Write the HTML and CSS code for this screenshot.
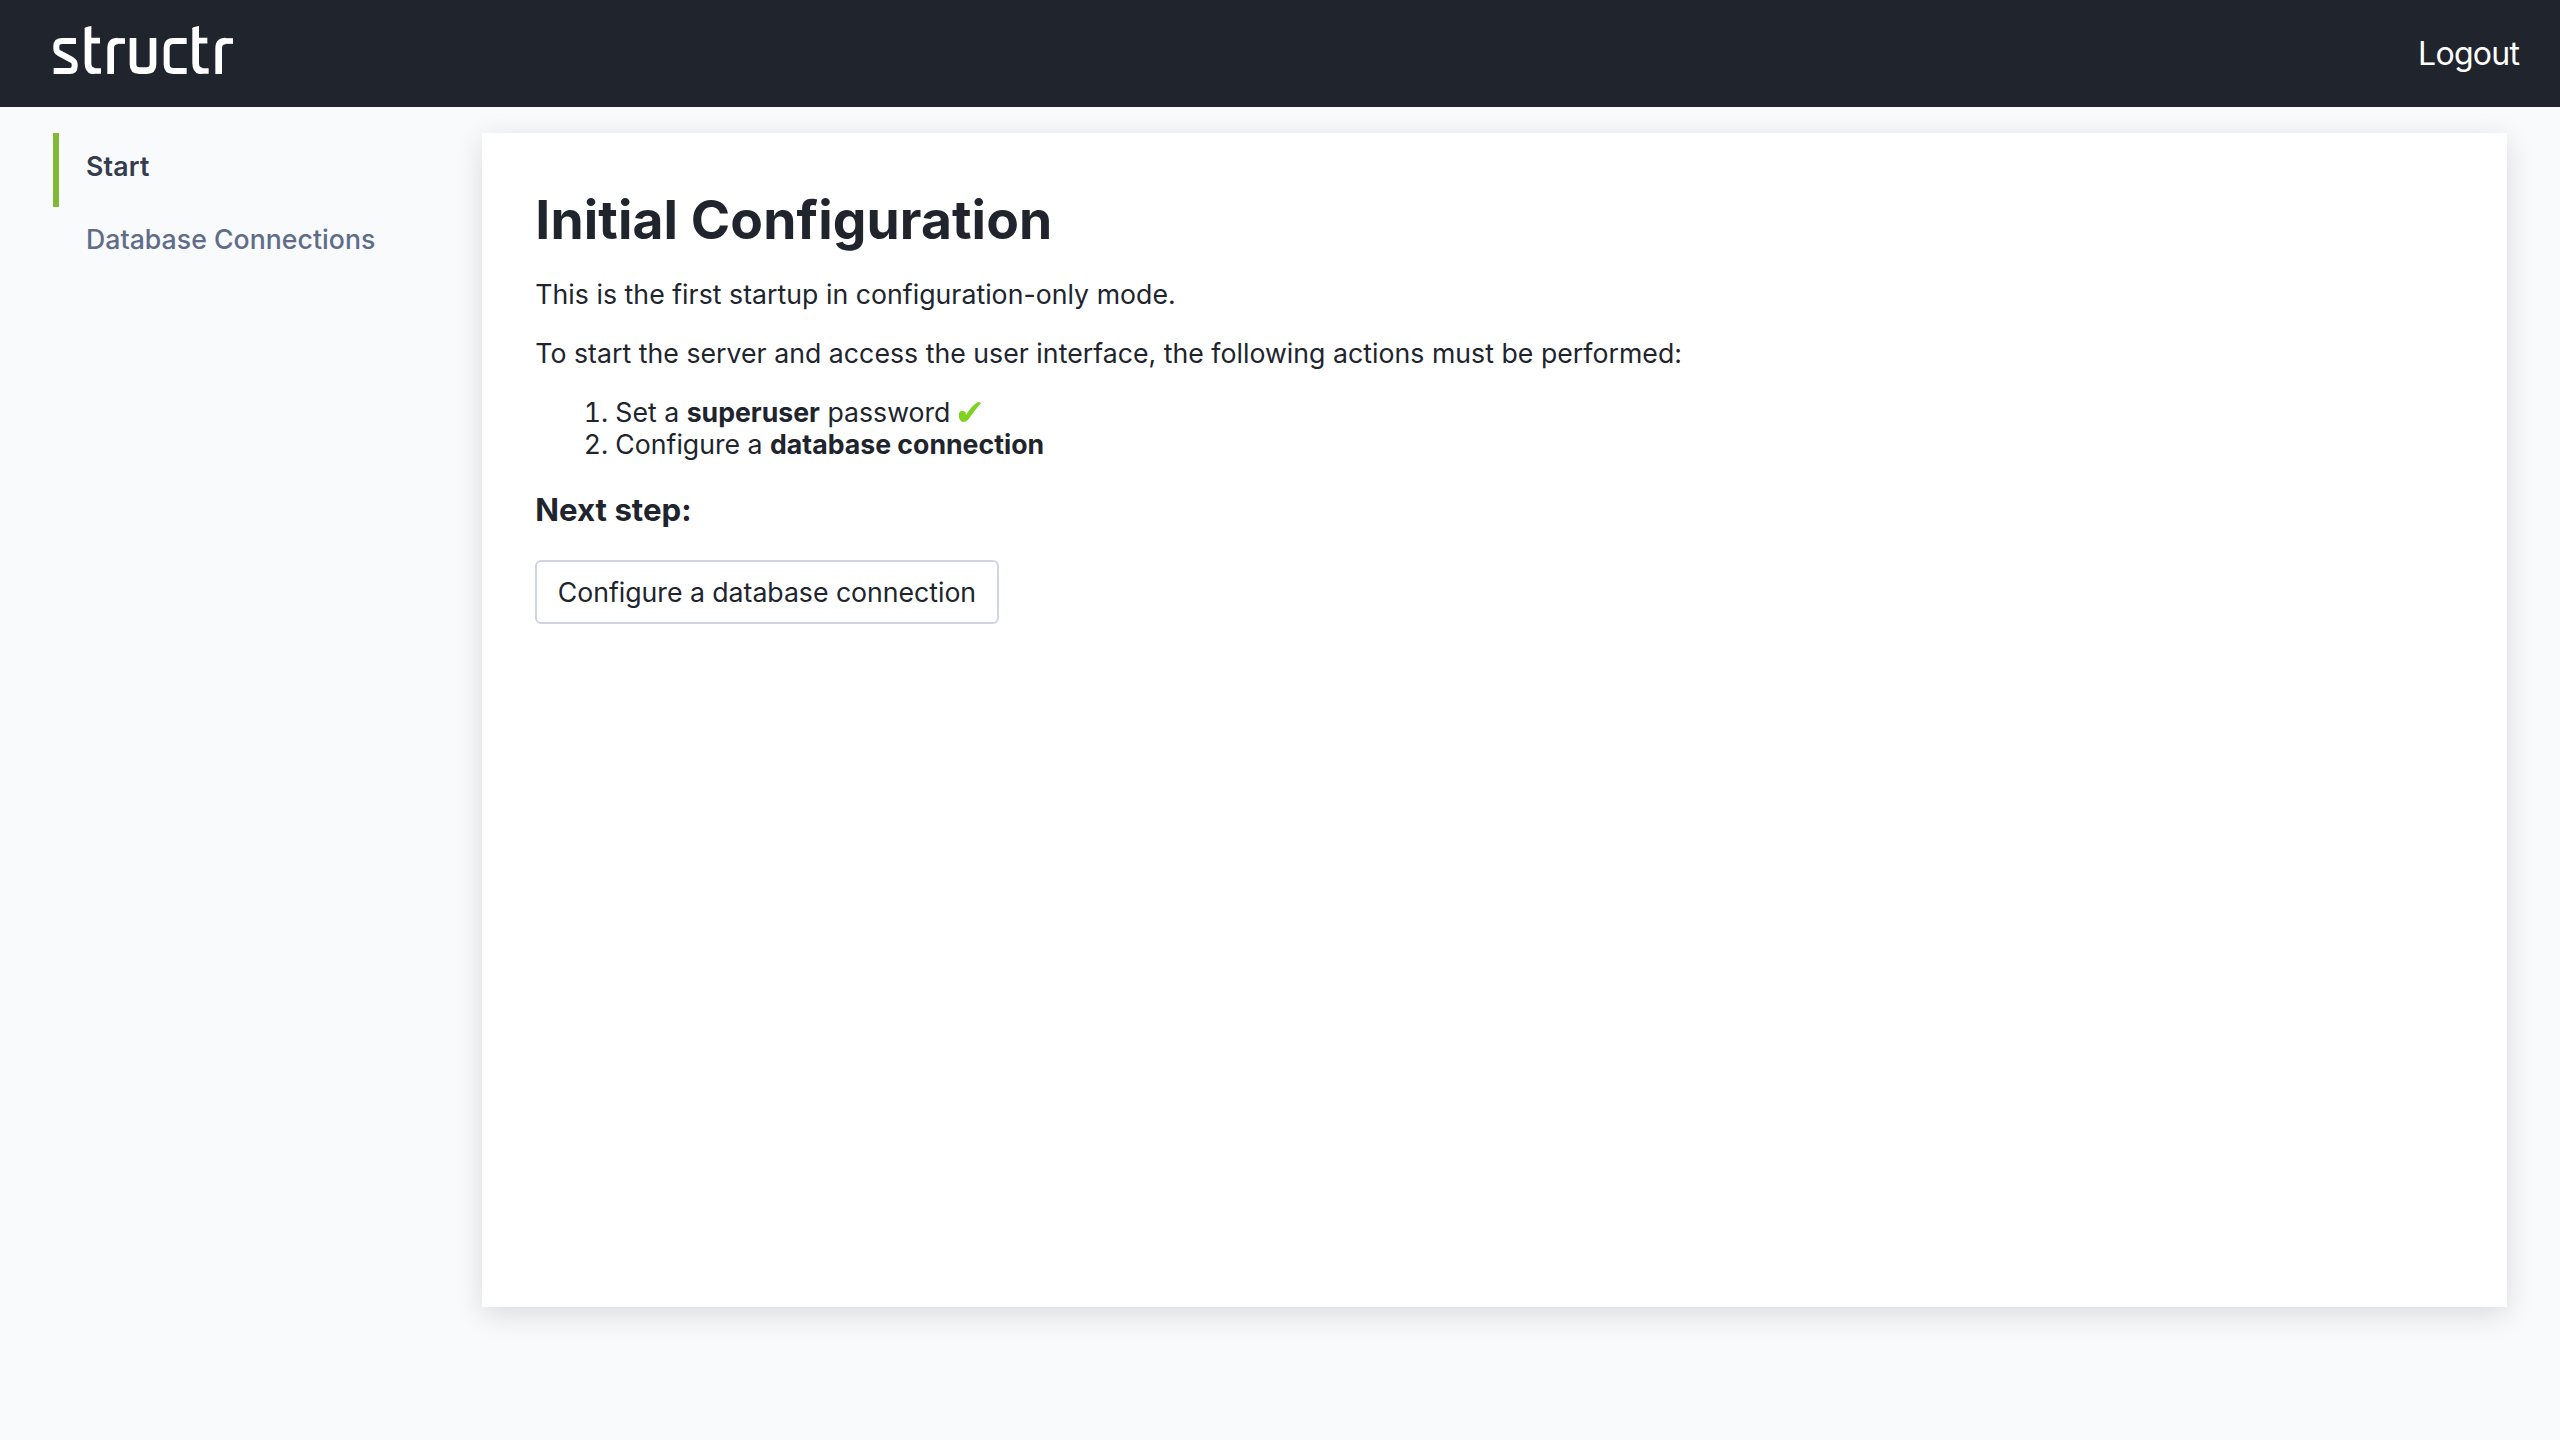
FILE: index.html
```html
<!DOCTYPE html>
<html lang="en">
<head>
<meta charset="utf-8">
<title>Structr Configuration</title>
<link rel="stylesheet" href="styles.css">
</head>
<body>
<header class="header">
  <svg class="logo" viewBox="39 48 540 144" role="img" aria-label="structr">
    <g fill="none" stroke="#fff" stroke-width="17" stroke-linejoin="round">
      <path stroke-width="18" d="M108 93H67Q49 93 49 109V116Q49 124 57 129L96 150Q104 155 104 163V168Q104 183 90 183H41"/>
      <path stroke-width="20" d="M144 54V160Q144 183 164 183"/>
      <path d="M144 92H180M158 183H183"/>
      <path stroke-width="20" d="M212 192V115Q212 93 233 93"/>
      <path d="M230 93H255"/>
      <path stroke-width="20" d="M279 84V163Q279 182 298 182H320Q339 182 339 163V84"/>
      <path stroke-width="18" d="M440 93H400Q380 93 380 113V163Q380 183 400 183H440"/>
      <path stroke-width="20" d="M467 54V160Q467 183 487 183"/>
      <path d="M467 92H502M481 183H506"/>
      <path stroke-width="20" d="M536 192V115Q536 93 557 93"/>
      <path d="M554 93H579"/>
    </g>
    <path fill="#fff" d="M134 55Q136 50 154 48V56H134ZM457 55Q459 50 477 48V56H457Z"/>
  </svg>
  <a class="logout">Logout</a>
</header>
<div class="layout">
  <nav class="menu">
    <a class="menu-item active">Start</a>
    <a class="menu-item">Database Connections</a>
  </nav>
  <main class="card">
    <h1>Initial Configuration</h1>
    <p>This is the first startup in configuration-only mode.</p>
    <p>To start the server and access the user interface, the following actions must be performed:</p>
    <ol>
      <li>Set a <b>superuser</b> password <svg class="check" viewBox="0 0 23 20"><path d="M1 11Q3 8 6 9Q8 10 8 13Q13 4 20 0Q22 0 23 1Q16 9 10 18Q8 20 5 20Q2 19 1 16Z"/></svg></li>
      <li>Configure a <b>database connection</b></li>
    </ol>
    <h3>Next step:</h3>
    <button class="button" type="button">Configure a database connection</button>
  </main>
</div>
</body>
</html>
```
FILE: styles.css
```css
* { box-sizing: border-box; }
body {
  margin: 0;
  min-height: 1440px;
  background: #f9fafc;
  color: #20242d;
  font: 26.667px/32px Inter, "Liberation Sans", sans-serif;
}
.header {
  display: flex;
  justify-content: space-between;
  align-items: flex-start;
  height: 107px;
  padding: 26px 40.7px 0 53px;
  background: #20242d;
  color: #fff;
}
.logo { width: 180px; height: 48px; }
.logout {
  padding-top: 8px;
  font-size: 32px;
  line-height: 40px;
  letter-spacing: -0.7px;
}
.layout {
  display: flex;
  padding: 26px 53px 0;
}
.menu { width: 429px; flex: none; }
.menu-item {
  display: block;
  height: 73px;
  padding: 16px 0 0 27px;
  border-left: 6px solid transparent;
  color: #5f6c8a;
  font-weight: 500;
  letter-spacing: 0.03px;
}
.menu-item.active {
  height: 74px;
  padding-top: 17px;
  border-color: #81b937;
  color: #353c4d;
  font-weight: 600;
  letter-spacing: 0.2px;
}
.card {
  flex: 1;
  height: 1174px;
  padding: 54.5px 53.33px;
  background: #fff;
  box-shadow: 0 7px 27px rgba(0, 0, 0, 0.13);
}
h1 {
  margin: 0 0 26px;
  font-size: 53.33px;
  line-height: 64.5px;
  letter-spacing: 0.1px;
}
p { margin: 0 0 27px; letter-spacing: 0.03px; }
ol { margin: 0; padding-left: 80px; }
h3 { margin: 31px 0; font-size: 31.2px; line-height: 38px; }
.check { width: 23px; height: 20px; fill: #7ed321; }
.button {
  height: 64px;
  padding: 0 20.5px 1px;
  border: 2px solid #d0d4e2;
  border-radius: 6px;
  background: #fff;
  color: inherit;
  font: inherit;
  letter-spacing: -0.02px;
}
```
